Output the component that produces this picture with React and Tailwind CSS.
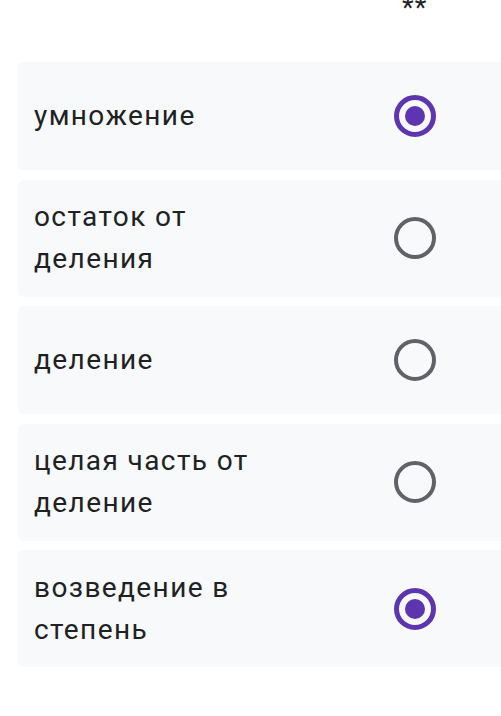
import React from "react";

const options = [
  { text: "умножение", checked: true, h: "h-[108px]" },
  { text: "остаток от деления", checked: false, h: "h-[117px]" },
  { text: "деление", checked: false, h: "h-[108px]" },
  { text: "целая часть от деление", checked: false, h: "h-[117px]" },
  { text: "возведение в степень", checked: true, h: "h-[117px]" },
];

function Radio({ checked }) {
  if (checked) {
    return (
      <div className="w-[42px] h-[42px] rounded-full border-[5px] border-[#5e35b1] flex items-center justify-center shrink-0">
        <div className="w-[20px] h-[20px] rounded-full bg-[#5e35b1]" />
      </div>
    );
  }
  return (
    <div className="w-[42px] h-[42px] rounded-full border-[4.5px] border-[#5f6368] shrink-0" />
  );
}

export default function App() {
  return (
    <div
      className="w-[501px] h-[716px] bg-white overflow-hidden"
      style={{ fontFamily: "Roboto, 'Noto Sans', sans-serif" }}
    >
      <div className="h-[62px] relative">
        <div className="absolute left-[402px] top-[-13px] text-[27px] leading-[42px] text-[#202124] tracking-[1px]">
          **
        </div>
      </div>
      <div className="flex flex-col gap-[9.5px] pl-[18px]">
        {options.map((o, i) => (
          <div
            key={i}
            className={`w-[520px] ${o.h} rounded-[6px] bg-[#f8f9fa] flex items-center pl-[16px]`}
          >
            <div className="w-[250px] text-[28px] leading-[42px] text-[#202124] tracking-[1.4px]">
              {o.text}
            </div>
            <div className="ml-[110px]">
              <Radio checked={o.checked} />
            </div>
          </div>
        ))}
      </div>
    </div>
  );
}
